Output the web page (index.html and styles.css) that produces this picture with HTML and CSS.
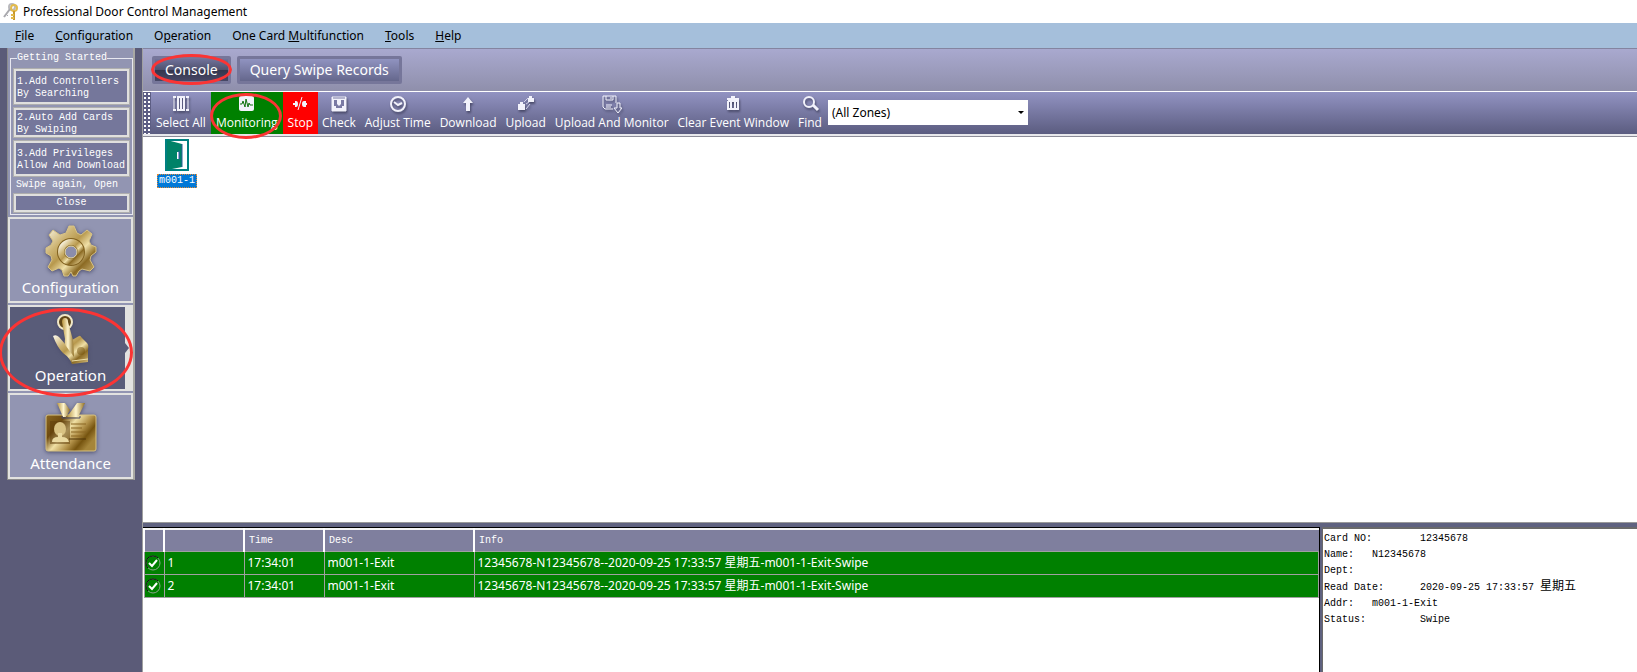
FILE: index.html
```html
<!DOCTYPE html>
<html lang="en">
    <head>
        <title>Professional Door Control Management</title>
        <meta charset="UTF-8">
        <link rel="stylesheet" href="styles.css">
    </head>
    <body>
        <svg class="defs" width="0" height="0">
            <defs>
                <linearGradient id="gold" x1="0" y1="0" x2="1" y2="1">
                    <stop offset="0" stop-color="#fffdf2"/>
                    <stop offset="0.3" stop-color="#cdb473"/>
                    <stop offset="0.45" stop-color="#b8994e"/>
                    <stop offset="0.6" stop-color="#efdfa6"/>
                    <stop offset="0.75" stop-color="#8c6b24"/>
                    <stop offset="1" stop-color="#d9c283"/>
                </linearGradient>
                <linearGradient id="goldH" x1="0" y1="0" x2="1" y2="0">
                    <stop offset="0" stop-color="#b8953f"/>
                    <stop offset="0.5" stop-color="#fff6cf"/>
                    <stop offset="1" stop-color="#8f6d22"/>
                </linearGradient>
                <linearGradient id="goldCard" x1="0" y1="0" x2="1" y2="0.6">
                    <stop offset="0" stop-color="#8a6722"/>
                    <stop offset="0.3" stop-color="#6e4a0f"/>
                    <stop offset="0.5" stop-color="#f0e0a4"/>
                    <stop offset="0.7" stop-color="#b3924a"/>
                    <stop offset="0.85" stop-color="#76540f"/>
                    <stop offset="1" stop-color="#a5853a"/>
                </linearGradient>
            </defs>
        </svg>

        <header class="titleBar">
            <svg width="16" height="18" viewBox="0 0 16 18">
                <circle cx="9" cy="4" r="3" fill="none" stroke="#b9b9bd" stroke-width="2"/>
                <path d="M7 6 L1 14" stroke="#a9a9ae" stroke-width="2"/>
                <path d="M3 11 L5 13" stroke="#a9a9ae" stroke-width="1"/>
                <circle cx="11" cy="5" r="3" fill="none" stroke="#e3bb4c" stroke-width="2"/>
                <path d="M11 8 L11 17" stroke="#c99a2c" stroke-width="2"/>
                <path d="M8 12 H11 M8 15 H11" stroke="#e3bb4c" stroke-width="2"/>
            </svg>
            <span>Professional Door Control Management</span>
        </header>

        <nav class="menuBar">
            <a href="#"><u>F</u>ile</a>
            <a href="#"><u>C</u>onfiguration</a>
            <a href="#">O<u>p</u>eration</a>
            <a href="#">One Card <u>M</u>ultifunction</a>
            <a href="#"><u>T</u>ools</a>
            <a href="#"><u>H</u>elp</a>
        </nav>

        <div class="workArea">
            <aside class="sideBar">
                <div class="sidePanel">
                    <fieldset class="started">
                        <legend>Getting Started</legend>
                        <button class="step stepTall">1.Add Controllers<br>By Searching</button>
                        <button class="step">2.Auto Add Cards<br>By Swiping</button>
                        <button class="step stepTall">3.Add Privileges<br>Allow And Download</button>
                        <p class="hint">Swipe again, Open</p>
                        <button class="step stepClose">Close</button>
                    </fieldset>
                    <button class="navBtn">
                        <svg width="52" height="52" viewBox="0 0 52 52">
                            <path d="M21 8 L24 1 H29 L32 8 L36 10 L42 5 L47 9 L44 16 L46 20 L51 22 V27 L46 31 L45 35 L49 42 L45 46 L37 44 L34 46 L31 51 H28 L26 47 L23 51 H19 L17 45 L14 43 L7 46 L3 42 L7 35 L6 31 L1 28 V23 L6 20 L8 16 L4 10 L8 5 L15 10 Z" fill="url(#gold)" stroke="#d8c384" stroke-width="1" stroke-linejoin="round"/>
                            <circle cx="26" cy="27" r="14" fill="#80601e"/>
                            <circle cx="26" cy="27" r="10" fill="none" stroke="url(#gold)" stroke-width="6"/>
                            <circle cx="26" cy="27" r="6" fill="#8b8dab" stroke="#e8dba8" stroke-width="1"/>
                        </svg>
                        <span>Configuration</span>
                    </button>
                    <button class="navBtn navActive">
                        <svg width="52" height="52" viewBox="0 0 52 52">
                            <circle cx="20" cy="9" r="7" fill="#604717" stroke="#f1e9c8" stroke-width="2"/>
                            <path d="M8 23 Q11 21 14 24 L21 32 L27 27 L34 23 Q35 22 37 25 L42 30 Q44 32 43 36 V49 L27 51 Q25 45 18 40 Q12 34 8 23 Z" fill="url(#gold)"/>
                            <path d="M17 9 Q17 5 20 5 Q23 5 23 9 L28 27 L29 44 L21 33 Q19 31 20 26 Z" fill="url(#goldH)"/>
                            <circle cx="36" cy="38" r="4" fill="#76540f" opacity="0.5"/>
                            <path d="M27 48 L43 46" stroke="#efe0a8" stroke-width="1"/>
                        </svg>
                        <span>Operation</span>
                        <i class="markRing markOperation"></i>
                    </button>
                    <button class="navBtn">
                        <svg width="52" height="52" viewBox="0 0 52 52">
                            <rect x="1" y="14" width="50" height="36" rx="2" fill="url(#goldCard)" stroke="#d8c384"/>
                            <path d="M12 2 H20 L25 9 L21 16 H18 Z" fill="url(#goldH)"/>
                            <path d="M32 2 H40 L33 16 H22 Z" fill="url(#goldH)"/>
                            <path d="M17 15 V17 H35 V15" fill="none" stroke="#4b4a66" stroke-width="1"/>
                            <path d="M5 20 H25 V43 H5 Z" fill="#5e3c0a" opacity="0.5"/>
                            <ellipse cx="15" cy="28" rx="6" ry="7" fill="#d9c283"/>
                            <path d="M7 41 Q7 36 13 36 V32 H17 V36 Q23 36 24 41 Z" fill="#ead9a0"/>
                            <path d="M26 23 H41 M26 27 H37 M26 31 H41 M26 35 H37" stroke="#8a6722" stroke-width="1"/>
                            <path d="M24 38 H41" stroke="#4f3508" stroke-width="1"/>
                        </svg>
                        <span>Attendance</span>
                    </button>
                </div>
            </aside>

            <main class="mainArea">
                <div class="tabStrip">
                    <button class="tab tabActive">Console<i class="markRing markConsole"></i></button>
                    <button class="tab">Query Swipe Records</button>
                </div>

                <div class="toolBar">
                    <i class="grip"></i>
                    <button class="tool">
                        <svg width="20" height="20" viewBox="0 0 20 20" fill="none" stroke="#f2f2fb">
                            <path d="M3 3 V17 M17 3 V17" stroke-width="1"/>
                            <path d="M2 3 H5 M15 3 H18 M2 16 H5 M15 16 H18 M6 3 H14 M6 16 H14" stroke-width="2"/>
                            <path d="M7 4 V16 M10 4 V16 M13 4 V16" stroke-width="2"/>
                        </svg>
                        Select All
                    </button>
                    <button class="tool toolGreen">
                        <svg width="20" height="20" viewBox="0 0 20 20">
                            <rect x="2" y="2" width="15" height="15" rx="2" fill="#f2f2fb"/>
                            <path d="M3 10 H5 L6 7 L8 13 L9 5 L11 13 L12 9 L13 11 H16" fill="none" stroke="#127412"/>
                        </svg>
                        Monitoring
                        <i class="markRing markMonitor"></i>
                    </button>
                    <button class="tool toolRed">
                        <svg width="20" height="20" viewBox="0 0 20 20" fill="#f2f2fb">
                            <path d="M3 9 H5 V7 H6 Q8 7 8 10 Q8 13 6 13 H5 V11 H3 Z M17 9 H16 V7 H14 Q12 7 12 10 Q12 13 14 13 H16 V11 H17 Z"/>
                            <path d="M12 3 L8 16" stroke="#f2f2fb"/>
                        </svg>
                        Stop
                    </button>
                    <button class="tool">
                        <svg width="20" height="20" viewBox="0 0 20 20">
                            <path d="M3 3 H17 V17 H3 Z" fill="#f2f2fb" stroke="#f2f2fb"/>
                            <path d="M5 6 H15 V12 H13 V14 H7 V12 H5 Z" fill="#7a7aa4"/>
                            <path d="M8 6 H12 V10 L10 12 L8 10 Z" fill="#f2f2fb"/>
                            <path d="M5 3 V5 M7 3 V5 M9 3 V5 M11 3 V5 M13 3 V5 M15 3 V5" stroke="#7a7aa4"/>
                        </svg>
                        Check
                    </button>
                    <button class="tool">
                        <svg width="20" height="20" viewBox="0 0 20 20" fill="none" stroke="#f2f2fb" stroke-width="2">
                            <circle cx="10" cy="10" r="7"/>
                            <path d="M6 8 L10 11 L14 9"/>
                        </svg>
                        Adjust Time
                    </button>
                    <button class="tool">
                        <svg width="20" height="20" viewBox="0 0 20 20" fill="#f2f2fb">
                            <path d="M10 3 L15 9 H12 V17 H8 V9 H5 Z"/>
                        </svg>
                        Download
                    </button>
                    <button class="tool">
                        <svg width="20" height="20" viewBox="0 0 20 20" fill="#f2f2fb">
                            <path d="M2 10 H4 V8 H7 V10 H9 V16 H2 Z M12 4 H13 V2 H16 V4 H18 V8 H12 Z"/>
                            <path d="M8 8 L12 4 M10 10 L13 8 M10 15 L14 10" stroke="#d4d4ea" fill="none"/>
                        </svg>
                        Upload
                    </button>
                    <button class="tool">
                        <svg width="20" height="20" viewBox="0 0 20 20" fill="none" stroke="#f2f2fb">
                            <path d="M11 15 H3 L1 13 V2 H14 V9"/>
                            <path d="M4 2 V6 H11 V2 M9 3 V5 M4 11 H10 M4 13 H9"/>
                            <path d="M15 9 H18 V14 H20 L16 19 L12 14 H15 Z"/>
                        </svg>
                        Upload And Monitor
                    </button>
                    <button class="tool">
                        <svg width="20" height="20" viewBox="0 0 20 20" fill="none" stroke="#f2f2fb" stroke-width="2">
                            <path d="M4 5 H16 M8 3 H12"/>
                            <path d="M5 7 V15 H15 V7 H5 M8 8 V15 M12 8 V15"/>
                        </svg>
                        Clear Event Window
                    </button>
                    <button class="tool">
                        <svg width="20" height="20" viewBox="0 0 20 20" fill="none" stroke="#f2f2fb" stroke-width="2">
                            <circle cx="9" cy="8" r="5"/>
                            <path d="M13 11 L18 16" stroke-width="3"/>
                        </svg>
                        Find
                    </button>
                    <label class="zone">
                        <select aria-label="Zone">
                            <option>(All Zones)</option>
                        </select>
                        <i class="zoneArrow"></i>
                    </label>
                </div>

                <section class="doorList">
                    <button class="door">
                        <svg width="24" height="32" viewBox="0 0 24 32">
                            <rect width="24" height="32" fill="#008080"/>
                            <path d="M4 2 H22 V30 H4 Z" fill="#fff"/>
                            <path d="M2 1 L17 5 V28 L2 31 Z" fill="#008268"/>
                            <path d="M17 5 V28" stroke="#2a5f94"/>
                            <rect x="12" y="13" width="2" height="7" fill="#fff"/>
                            <path d="M14 12 V20" stroke="#3a4fb0"/>
                        </svg>
                        <span>m001-1</span>
                    </button>
                </section>

                <div class="bottomArea">
                    <section class="events">
                        <table>
                            <colgroup>
                                <col class="colIcon"><col class="colNo"><col class="colTime"><col class="colDesc"><col>
                            </colgroup>
                            <thead>
                                <tr><th></th><th></th><th>Time</th><th>Desc</th><th>Info</th></tr>
                            </thead>
                            <tbody>
                                <tr>
                                    <td class="ok"><svg width="16" height="16" viewBox="0 0 16 16" fill="none"><circle cx="8" cy="8" r="7" stroke="#8ba58b"/><path d="M3 13 A7 7 0 1 1 13 3" stroke="#000"/><path d="M4 8 L7 11 L12 5" stroke="#fff" stroke-width="2"/></svg></td>
                                    <td>1</td><td>17:34:01</td><td>m001-1-Exit</td><td>12345678-N12345678--2020-09-25 17:33:57 星期五-m001-1-Exit-Swipe</td>
                                </tr>
                                <tr>
                                    <td class="ok"><svg width="16" height="16" viewBox="0 0 16 16" fill="none"><circle cx="8" cy="8" r="7" stroke="#8ba58b"/><path d="M3 13 A7 7 0 1 1 13 3" stroke="#000"/><path d="M4 8 L7 11 L12 5" stroke="#fff" stroke-width="2"/></svg></td>
                                    <td>2</td><td>17:34:01</td><td>m001-1-Exit</td><td>12345678-N12345678--2020-09-25 17:33:57 星期五-m001-1-Exit-Swipe</td>
                                </tr>
                            </tbody>
                        </table>
                    </section>
                    <pre class="cardInfo">Card NO:	12345678
Name:	N12345678
Dept:
Read Date:	2020-09-25 17:33:57 <span>星期五</span>
Addr:	m001-1-Exit
Status:		Swipe</pre>
                </div>
            </main>
        </div>
    </body>
</html>
```
FILE: styles.css
```css
* {
    box-sizing: border-box;
}
body {
    margin: 0;
    height: 100vh;
    display: flex;
    flex-direction: column;
    overflow: hidden;
    background: #5b5b78;
    font-family: "Noto Sans", "Noto Sans CJK SC", sans-serif;
    font-size: 12px;
    color: #000;
}
button {
    margin: 0;
    padding: 0;
    border: 0;
    background: none;
    color: #fff;
    font: inherit;
}
.defs {
    position: absolute;
}
.titleBar {
    display: flex;
    align-items: center;
    gap: 4px;
    height: 23px;
    padding-left: 3px;
    background: #fff;
}
.menuBar {
    display: flex;
    align-items: center;
    gap: 21px;
    height: 25px;
    padding-left: 15px;
    background: #a5bfdb;
}
.menuBar a {
    color: #000;
    text-decoration: none;
}
.workArea {
    flex: 1;
    display: flex;
    min-height: 0;
}

/* left side */
.sideBar {
    flex: none;
    width: 142px;
    padding: 0 7px;
}
.sidePanel {
    display: flex;
    flex-direction: column;
    gap: 2px;
    border: 1px solid #8c8c8c;
    border-right: 2px solid #a8a8a4;
    border-top: 0;
    background: #9295b2;
}
.started {
    display: flex;
    flex-direction: column;
    gap: 2px;
    min-width: 0;
    margin: 2px 0 0 2px;
    padding: 2px 2px 1px;
    border: 1px solid #e8e8f0;
    color: #fff;
    font: 10px/12px "Liberation Mono", monospace;
}
.started legend {
    margin-left: 4px;
    padding: 0;
    line-height: 16px;
}
.step {
    height: 31px;
    padding: 2px 0 0 1px;
    border: 3px solid #e0e0de;
    outline: 1px solid #aeaeae;
    outline-offset: -1px;
    background: #75779b;
    text-align: left;
    white-space: nowrap;
}
.stepTall {
    height: 37px;
}
.stepClose {
    height: 20px;
    padding: 0;
    text-align: center;
}
.hint {
    margin: 0 0 0 3px;
    line-height: 12px;
    white-space: nowrap;
}
.navBtn {
    position: relative;
    display: flex;
    flex-direction: column;
    align-items: center;
    height: 86px;
    padding-top: 6px;
    border: 2px solid #e2e2e0;
    font-size: 15px;
    line-height: 20px;
}
.navBtn svg {
    filter: drop-shadow(0 1px 2px #4a4b6a);
}
.navActive {
    border-right-width: 8px;
    padding-left: 6px;
    background: #595c79;
}
.navActive::after {
    content: "";
    position: absolute;
    top: 36px;
    right: -4px;
    border: 5px solid transparent;
    border-left: 4px solid #595c79;
    border-right: 0;
}

/* tabs */
.mainArea {
    flex: 1;
    display: flex;
    flex-direction: column;
    min-width: 0;
    border-left: 1px solid #a0a0a0;
}
.tabStrip {
    display: flex;
    gap: 6px;
    height: 43px;
    padding: 7px 9px;
    border-top: 1px solid #8484a0;
    background: linear-gradient(#a9a9cf, #8f8fab);
}
.tab {
    position: relative;
    padding: 0 10px;
    border: 3px solid #76769a;
    border-radius: 2px;
    background: linear-gradient(#9093c0, #65678c);
    font-size: 14px;
    line-height: 22px;
}
.tabActive {
    background: linear-gradient(#70729a 0%, #50526f 48%, #34354c 50%, #474866);
}

/* toolbar */
.toolBar {
    display: flex;
    align-items: stretch;
    height: 45px;
    border-top: 1px solid #fff;
    border-bottom: 2px solid #e8e8ec;
    background: linear-gradient(#9293c2, #5b5c80);
}
.grip {
    width: 8px;
    background-image: radial-gradient(circle, #fff 1px, transparent 1px);
    background-size: 4px 4px;
    background-color: #5d5e84;
}
.tool {
    position: relative;
    display: flex;
    flex-direction: column;
    align-items: center;
    gap: 1px;
    padding: 2px 5px 0 4px;
    font-family: "Open Sans", sans-serif;
    line-height: 16px;
    white-space: nowrap;
}
.tool svg {
    filter: drop-shadow(1px 2px 1px #4a4b6a);
}
.toolGreen,
.toolRed {
    padding: 2px 5px 0;
    background: #008000;
}
.toolRed {
    background: #f00;
}
.toolGreen svg,
.toolRed svg {
    filter: none;
}
.grip + .tool {
    padding-left: 5px;
}
.zone {
    position: relative;
    align-self: flex-start;
    margin: 8px 0 0 1px;
}
.zone select {
    display: block;
    appearance: none;
    width: 200px;
    height: 25px;
    padding: 0 4px;
    border: 0;
    border-radius: 0;
    background: #fff;
    font: inherit;
    color: #000;
}
.zoneArrow {
    position: absolute;
    top: 11px;
    right: 4px;
    border: 3px solid transparent;
    border-top-color: #000;
    border-bottom: 0;
}

/* doors */
.doorList {
    flex: 1;
    padding: 2px 14px;
    border-top: 1px solid #8c8c98;
    border-bottom: 1px solid #9a9a9a;
    background: #fff;
}
.door {
    display: flex;
    flex-direction: column;
    align-items: center;
    gap: 3px;
    font: 10px/12px "Liberation Mono", monospace;
}
.door span {
    padding: 0 1px;
    border: 1px dotted #e08a38;
    background: #0078d7;
}

/* events and card info */
.bottomArea {
    flex: none;
    display: flex;
    gap: 2px;
    height: 149px;
    padding-top: 4px;
    background: #5f6280;
}
.events {
    flex: 1;
    min-width: 0;
    border: 1px solid #000;
    border-width: 1px 1px 0 0;
    background: #fff;
}
.events table {
    width: 100%;
    border-collapse: collapse;
    table-layout: fixed;
    border-top: 2px solid #f4f4f4;
}
.colIcon {
    width: 20px;
}
.colNo,
.colTime {
    width: 80px;
}
.colDesc {
    width: 150px;
}
.events th {
    height: 22px;
    padding: 2px 4px 0;
    border-left: 2px solid #fff;
    border-bottom: 1px solid #a0a0a0;
    background: #7f7f9e;
    color: #fff;
    font: 10px/12px "Liberation Mono", monospace;
    text-align: left;
}
.events td {
    height: 23px;
    padding: 0 3px;
    border: 1px solid #a0a0a0;
    background: #008000;
    color: #fff;
    line-height: 16px;
    white-space: nowrap;
}
.events .ok {
    padding: 0;
}
.ok svg {
    display: block;
}
.cardInfo {
    flex: none;
    width: 315px;
    margin: 0;
    padding: 2px 0 0 1px;
    border: 1px solid #6a6a6a;
    border-width: 2px 0 0 1px;
    background: #fff;
    font: 10px/16px "Liberation Mono", "Noto Sans CJK SC", monospace;
    tab-size: 8;
}
.cardInfo span {
    font-size: 12px;
}

/* red rings drawn over the clicked controls */
.markRing {
    position: absolute;
    z-index: 1;
    border: 3px solid #fb3434;
    border-radius: 50%;
    pointer-events: none;
}
.markConsole {
    inset: -5px -4px -4px;
}
.markMonitor {
    inset: 1px 1px -5px -1px;
}
.markOperation {
    inset: 1px -8px -8px -11px;
}
```
